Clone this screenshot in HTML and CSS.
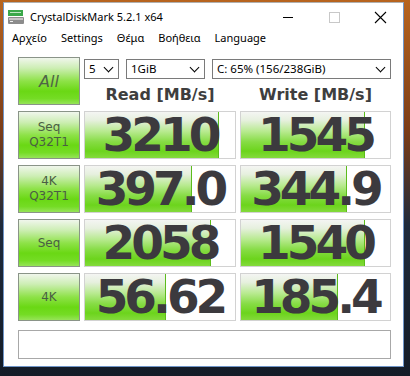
FILE: index.html
```html
<!DOCTYPE html>
<html lang="el">
<head>
    <meta charset="UTF-8">
    <title>CrystalDiskMark 5.2.1 x64</title>
    <link rel="stylesheet" href="styles.css">
</head>
<body>
<div class="window">
    <div class="titlebar">
        <svg class="app-icon" width="16" height="16" viewBox="0 0 16 16">
            <rect x="0" y="1" width="15" height="6" fill="#3aa84a"/>
            <rect x="2" y="3" width="11" height="1" fill="#bfe8c4"/>
            <rect x="0" y="8" width="16" height="7" rx="1" fill="#8c8c8c"/>
            <rect x="1" y="9" width="14" height="2" fill="#c4c4c4"/>
            <rect x="2" y="12" width="3" height="1" fill="#f0f0f0"/>
        </svg>
        <span class="title">CrystalDiskMark 5.2.1 x64</span>
        <div class="controls">
            <svg width="46" height="27" viewBox="0 0 46 27"><line x1="18" y1="14.5" x2="28" y2="14.5" stroke="#000" stroke-width="1"/></svg>
            <svg width="46" height="27" viewBox="0 0 46 27"><rect x="18.5" y="9.5" width="10" height="10" fill="none" stroke="#c8c8c8" stroke-width="1"/></svg>
            <svg width="46" height="27" viewBox="0 0 46 27"><path d="M18 9 L29 20 M29 9 L18 20" stroke="#000" stroke-width="1.1"/></svg>
        </div>
    </div>
    <div class="menubar">
        <span>Αρχείο</span>
        <span>Settings</span>
        <span>Θέμα</span>
        <span>Βοήθεια</span>
        <span>Language</span>
    </div>
    <div class="main">
        <div class="btn btn-all">All</div>
        <div class="top">
            <div class="selects">
                <div class="select s-count">5</div>
                <div class="select s-size">1GiB</div>
                <div class="select s-drive">C: 65% (156/238GiB)</div>
            </div>
            <div class="heads">
                <div class="head">Read [MB/s]</div>
                <div class="head">Write [MB/s]</div>
            </div>
        </div>

        <div class="btn"><span>Seq<br>Q32T1</span></div>
        <div class="box"><div class="fill" style="width: 89%"></div><span class="num">3210</span></div>
        <div class="box"><div class="fill" style="width: 83%"></div><span class="num">1545</span></div>

        <div class="btn"><span>4K<br>Q32T1</span></div>
        <div class="box"><div class="fill" style="width: 71%"></div><span class="num">397.0</span></div>
        <div class="box"><div class="fill" style="width: 71%"></div><span class="num">344.9</span></div>

        <div class="btn"><span>Seq</span></div>
        <div class="box"><div class="fill" style="width: 84%"></div><span class="num">2058</span></div>
        <div class="box"><div class="fill" style="width: 83%"></div><span class="num">1540</span></div>

        <div class="btn"><span>4K</span></div>
        <div class="box"><div class="fill" style="width: 54%"></div><span class="num">56.62</span></div>
        <div class="box"><div class="fill" style="width: 65%"></div><span class="num">185.4</span></div>

        <div class="comment"></div>
    </div>
</div>
</body>
</html>
```

FILE: styles.css
```css
* {
    margin: 0;
    padding: 0;
    box-sizing: border-box;
}
body {
    width: 410px;
    height: 376px;
    padding: 2px 0 0 3px;
    background: linear-gradient(to bottom, #b8641e 0%, #7a3c18 35%, #1e2a3c 60%, #141c28 100%);
    font-family: "Noto Sans", "DejaVu Sans", sans-serif;
    overflow: hidden;
}
.window {
    width: 401px;
    height: 365px;
    background: #fff;
    border: 1px solid #6f95c8;
    border-top-color: #b0b0b0;
}
.titlebar {
    display: flex;
    align-items: center;
    height: 27px;
}
.app-icon {
    margin-left: 4px;
    margin-top: 1px;
}
.title {
    margin-left: 6px;
    font-size: 11px;
    color: #000;
}
.controls {
    display: flex;
    margin-left: auto;
}
.menubar {
    display: flex;
    height: 16px;
    line-height: 16px;
    padding-left: 1px;
    font-size: 11px;
    color: #000;
}
.menubar span {
    padding: 0 7px;
}
.main {
    display: grid;
    grid-template-columns: 62px 152px 151px;
    grid-auto-rows: 48px;
    column-gap: 4px;
    row-gap: 6px;
    padding: 11px 0 0 14px;
}
.btn {
    display: flex;
    align-items: center;
    justify-content: center;
    border: 1px solid #8a9488;
    background: linear-gradient(to bottom, #f0f6ec 0%, #cdeeb4 22%, #8ee248 50%, #6ad814 72%, #74dc24 88%, #96e458 100%);
    font-family: "DejaVu Sans", sans-serif;
    font-size: 12px;
    line-height: 15px;
    color: #4a5e44;
    text-align: center;
}
.btn-all {
    font-size: 16px;
    font-style: italic;
    color: #4e6446;
}
.top {
    grid-column: 2 / span 2;
}
.selects {
    display: flex;
    gap: 7px;
    margin-top: 2px;
}
.select {
    position: relative;
    height: 20px;
    line-height: 18px;
    padding-left: 4px;
    border: 1px solid #7a7a7a;
    background: #fff;
    font-size: 11.5px;
    color: #000;
}
.select::after {
    content: "";
    position: absolute;
    right: 6px;
    top: 4px;
    width: 6px;
    height: 6px;
    border-right: 1px solid #000;
    border-bottom: 1px solid #000;
    transform: rotate(45deg);
}
.s-count {
    width: 35px;
}
.s-size {
    width: 79px;
}
.s-drive {
    width: 179px;
}
.heads {
    display: grid;
    grid-template-columns: 152px 151px;
    column-gap: 4px;
    margin-top: 6px;
}
.head {
    line-height: 20px;
    text-align: center;
    font-family: "DejaVu Sans", sans-serif;
    font-weight: bold;
    font-size: 16px;
    color: #3e3e3e;
}
.box {
    position: relative;
    border: 1px solid #d2d2d2;
    background: #fff;
    display: flex;
    align-items: center;
    justify-content: center;
}
.fill {
    position: absolute;
    left: 0;
    top: 0;
    bottom: 0;
    border-right: 1px solid #5cbc1c;
    background: linear-gradient(to bottom, #f4f5f3 0%, #e6f0de 18%, #b8ea90 42%, #86dc44 65%, #6cd41c 85%, #84da3c 100%);
}
.num {
    position: relative;
    font-family: "DejaVu Sans", sans-serif;
    font-weight: bold;
    font-size: 47px;
    letter-spacing: -4px;
    color: #3c3a3e;
    line-height: 46px;
}
.comment {
    grid-column: 1 / span 3;
    height: 29px;
    margin-top: 3px;
    border: 1px solid #a8a8a8;
    background: #fff;
}
```
